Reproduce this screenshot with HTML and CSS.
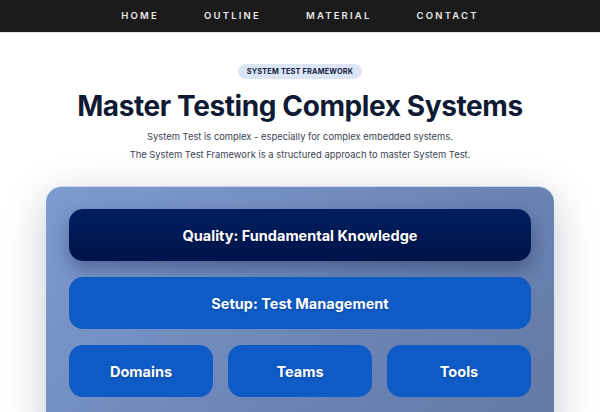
FILE: index.html
```html
<!DOCTYPE html>
<html lang="en">
<head>
    <meta charset="UTF-8">
    <meta name="viewport" content="width=device-width, initial-scale=1.0">
    <title>System Test Framework</title>
    <link rel="stylesheet" href="styles.css">
</head>
<body>
    <!-- navigation -->
    <nav class="topnav">
        <ul>
            <li><a href="#">Home</a></li>
            <li><a href="#">Outline</a></li>
            <li><a href="#">Material</a></li>
            <li><a href="#">Contact</a></li>
        </ul>
    </nav>

    <!-- hero -->
    <section class="hero">
        <span class="badge">System Test Framework</span>
        <h1>Master Testing Complex Systems</h1>
        <p>System Test is complex - especially for complex embedded systems.<br>
        The System Test Framework is a structured approach to master System Test.</p>
    </section>

    <!-- framework stack -->
    <section class="framework">
        <div class="stack">
            <div class="layer layer-quality">Quality: Fundamental Knowledge</div>
            <div class="layer">Setup: Test Management</div>
            <div class="pillars">
                <div class="layer">Domains</div>
                <div class="layer">Teams</div>
                <div class="layer">Tools</div>
            </div>
        </div>
    </section>
</body>
</html>
```

FILE: styles.css
```css
* {
    margin: 0;
    padding: 0;
    box-sizing: border-box;
}

body {
    font-family: 'Inter', 'Noto Sans', sans-serif;
    background-color: #fff;
    color: #0f1b35;
}

.topnav {
    background-color: #1b1b1b;
    height: 33px;
    border-bottom: 1px solid #e5e5e5;
    display: flex;
    justify-content: center;
    align-items: center;
    padding-bottom: 6px;
}

.topnav ul {
    list-style: none;
    display: flex;
    gap: 45px;
    line-height: 1;
}

.topnav a {
    color: #eaeaea;
    text-decoration: none;
    font-size: 9.5px;
    font-weight: 600;
    letter-spacing: 2.2px;
    text-transform: uppercase;
}

.hero {
    padding-top: 25px;
    text-align: center;
}

.badge {
    display: inline-block;
    background-color: #dbe5f6;
    color: #13213f;
    font-size: 7.3px;
    font-weight: 700;
    letter-spacing: 0.2px;
    text-transform: uppercase;
    padding: 3px 9px;
    border-radius: 999px;
}

.hero h1 {
    font-size: 28px;
    font-weight: 700;
    letter-spacing: -0.4px;
    color: #0f1b35;
    margin: 10px 0 5px;
}

.hero p {
    font-size: 9.4px;
    line-height: 18px;
    color: #3b4354;
}

.framework {
    padding: 22px 46px 0;
}

.stack {
    background: linear-gradient(135deg, #7e9bd0 0%, #6b84b4 60%, #6379a6 100%);
    border-top: 1px solid #c7d5ef;
    border-radius: 16px;
    padding: 22px 23px 40px;
    display: flex;
    flex-direction: column;
    gap: 16px;
    box-shadow: 0 12px 40px rgba(30, 40, 70, 0.25);
}

.layer {
    background-color: #0e5bc6;
    color: #fff;
    border-radius: 14px;
    height: 52px;
    display: flex;
    align-items: center;
    justify-content: center;
    font-size: 14.5px;
    font-weight: 700;
    text-shadow: 0 1px 2px rgba(0, 0, 0, 0.25);
}

.layer-quality {
    background: linear-gradient(180deg, #001f5e 0%, #00134a 100%);
    box-shadow: 0 8px 18px rgba(0, 20, 60, 0.35);
}

.pillars {
    display: grid;
    grid-template-columns: repeat(3, 1fr);
    gap: 15px;
}
```
